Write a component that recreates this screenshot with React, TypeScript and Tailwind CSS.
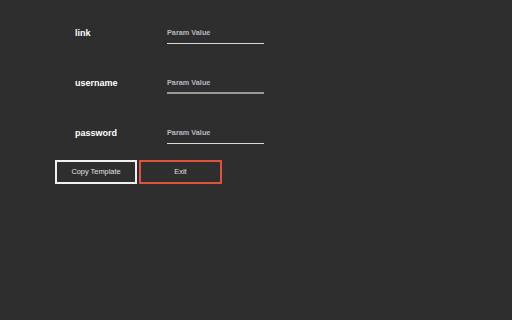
const fields = ['link', 'username', 'password'];

export default function App() {
  return (
    <div
      className="w-[512px] h-[320px] bg-[#2e2e2e] pl-[55px] pt-[22px]"
      style={{ fontFamily: '"Liberation Sans", Arial, sans-serif' }}
    >
      <div className="flex flex-col gap-[28px]">
        {fields.map((name) => (
          <div key={name} className="flex items-center h-[22px]">
            <div className="w-[112px] pl-[20px] pt-[1px] text-[9px] font-bold text-white">{name}</div>
            <div
              className={
                name === 'username'
                  ? 'w-[97px] h-[22px] flex items-center pt-[2px] border-b-2 border-[#9a9a9a]'
                  : 'w-[97px] h-[22px] flex items-center pt-[2px] border-b border-[#d8d8d8]'
              }
            >
              <span className="text-[7.3px] font-bold text-[#b8b8c0]">Param Value</span>
            </div>
          </div>
        ))}
      </div>
      <div className="flex gap-[2px] mt-[16px]">
        <button className="w-[82px] h-[24px] border-2 border-[#f0f0f0] text-[7.4px] text-[#e0e0e4]">
          Copy Template
        </button>
        <button className="w-[83px] h-[24px] border-2 border-[#e0533a] text-[7.4px] text-[#e0e0e4]">
          Exit
        </button>
      </div>
    </div>
  );
}
